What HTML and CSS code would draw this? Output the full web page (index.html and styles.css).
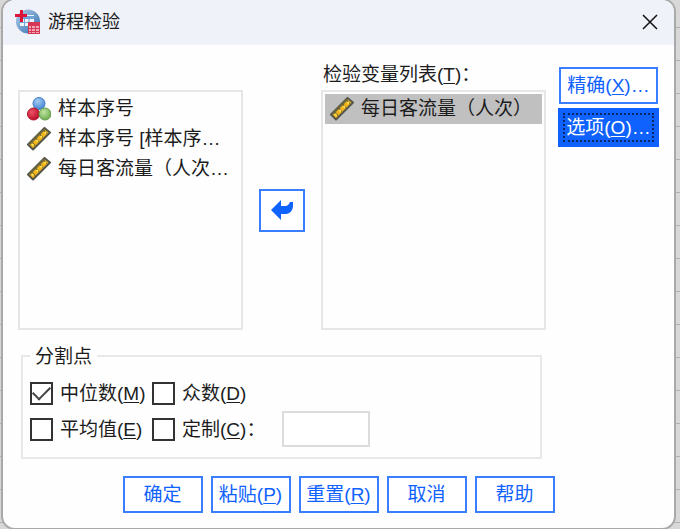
FILE: index.html
```html
<!DOCTYPE html>
<html lang="zh-CN">
<head>
<meta charset="utf-8">
<meta name="viewport" content="width=device-width, initial-scale=1">
<title>游程检验</title>
<link rel="stylesheet" href="styles.css">
</head>
<body>
<svg class="defs" aria-hidden="true">
  <defs>
    <radialGradient id="blue" cx="40%" cy="30%" r="70%"><stop offset="0" stop-color="#a5cdf5"/><stop offset="1" stop-color="#4585d0"/></radialGradient>
    <radialGradient id="red" cx="35%" cy="35%" r="70%"><stop offset="0" stop-color="#ee5266"/><stop offset="1" stop-color="#b80d28"/></radialGradient>
    <radialGradient id="green" cx="40%" cy="35%" r="70%"><stop offset="0" stop-color="#bfe5a0"/><stop offset="1" stop-color="#6aa84c"/></radialGradient>
    <linearGradient id="globe" x1="0" y1="0" x2="1" y2="1"><stop offset="0" stop-color="#b5cfe8"/><stop offset="1" stop-color="#2c6cb0"/></linearGradient>
    <symbol id="ruler" viewBox="0 0 24 24">
      <path d="M1 17.500 17.500 1 23 5.500 6 22.500Z" fill="#f4b41a" stroke="#55564a" stroke-width="2" stroke-linejoin="round"/>
      <path d="M2.500 17 17 2.500" stroke="#6b6740" stroke-width="2"/>
      <path d="m4 14.500 4 4M8 10.500l4 4M12 6.500l4 4M16 2.500l4 4" stroke="#6b6238" stroke-width="1.200"/>
      <path d="m5 18.500 1.500-1.500M9.500 14.500l1.500-1.500M13.500 10.500l1.500-1.500M17.500 6.500l1.500-1.500" stroke="#ffe04f" stroke-width="2.200"/>
    </symbol>
  </defs>
</svg>
<main class="dialog">
  <header class="titlebar">
    <svg class="app-icon" viewBox="0 0 25 25" aria-hidden="true">
      <circle cx="13" cy="12.500" r="12" fill="url(#globe)"/>
      <path d="M5 6h14v11H5z" fill="#edf5fc"/>
      <path d="M5 7h14v3H5z" fill="#6fa3d7"/>
      <path d="M5 13.500h14M9.500 10v7M14 10v7" stroke="#75a6d5"/>
      <path d="M5 1h3v4h4v3H8v5H5V8H0V5h5z" fill="#dc1438"/>
      <path d="M13 13h12v12H13z" fill="#d63756"/>
      <path d="M14 17h2v2h-2zm3 0h3v2h-3zm4 0h3v2h-3zm-7 3h2v2h-2zm3 0h3v2h-3zm4 0h3v2h-3zm-7 3h2v1h-2zm3 0h3v1h-3zm4 0h3v1h-3z" fill="#f3a5b3"/>
    </svg>
    <h1 class="title">游程检验</h1>
    <button class="close" type="button" aria-label="关闭"><svg viewBox="0 0 16 16"><path d="m1 1 14 14M15 1 1 15" stroke="#111" stroke-width="1.500"/></svg></button>
  </header>
  <form class="content">
    <div class="workspace">
      <div class="main">
        <div class="transfer">
          <ul class="list source" role="listbox" aria-label="变量">
            <li class="item" role="option" aria-selected="false"><svg class="icon" viewBox="0 0 24 24"><circle cx="12" cy="6.500" r="6" fill="url(#blue)" stroke="#427fc5"/><circle cx="6.500" cy="17" r="6" fill="url(#red)" stroke="#ad142b"/><circle cx="18" cy="17" r="6" fill="url(#green)" stroke="#629b48"/></svg><span>样本序号</span></li>
            <li class="item" role="option" aria-selected="false"><svg class="icon"><use href="#ruler"/></svg><span>样本序号 [样本序…</span></li>
            <li class="item" role="option" aria-selected="false"><svg class="icon"><use href="#ruler"/></svg><span>每日客流量（人次…</span></li>
          </ul>
          <button class="button move" type="button" aria-label="移动变量"><svg viewBox="0 0 22 20"><path d="M0 10 10 0v6h4c3 0 4-2 5-4h3v4c0 4-3 8-7 8h-5v6Z" fill="#0f62fe"/></svg></button>
          <span class="list-label" id="test-label">检验变量列表(<u>T</u>)：</span>
          <ul class="list target" role="listbox" aria-labelledby="test-label">
            <li class="item selected" role="option" aria-selected="true"><svg class="icon"><use href="#ruler"/></svg><span>每日客流量（人次）</span></li>
          </ul>
        </div>
        <fieldset class="cut">
          <legend>分割点</legend>
          <div class="choices">
            <label class="choice first"><input type="checkbox" checked><span>中位数(<u>M</u>)</span></label>
            <label class="choice"><input type="checkbox"><span>众数(<u>D</u>)</span></label>
            <label class="choice first"><input type="checkbox"><span>平均值(<u>E</u>)</span></label>
            <label class="choice"><input type="checkbox"><span>定制(<u>C</u>)：</span></label>
            <input class="custom" type="text" aria-label="定制值">
          </div>
        </fieldset>
      </div>
      <div class="side">
        <button class="button" type="button">精确(<u>X</u>)…</button>
        <button class="button active" type="button">选项(<u>O</u>)…</button>
      </div>
    </div>
    <footer class="actions">
      <button class="button" type="button">确定</button>
      <button class="button" type="button">粘贴(<u>P</u>)</button>
      <button class="button" type="button">重置(<u>R</u>)</button>
      <button class="button" type="button">取消</button>
      <button class="button" type="button">帮助</button>
    </footer>
  </form>
</main>
</body>
</html>
```
FILE: styles.css
```css
* { box-sizing: border-box; }

body {
  margin: 0;
  padding: 0 6px 1px 3px;
  min-height: 100vh;
  background: repeating-linear-gradient(#d8d8d8 0 27px, #b2b2b2 27px 28px, #d8d8d8 28px 33px);
  color: #1c1c1c;
  font: 19px/24px "Liberation Sans", "Noto Sans CJK SC", sans-serif;
}

button, input { font: inherit; color: inherit; }
u { text-underline-offset: 2px; text-decoration-thickness: 1px; }
.defs { position: absolute; width: 0; height: 0; }

.dialog {
  background: #fefefe;
  border-radius: 12px;
  box-shadow: 0 0 0 2px #a9a9a9;
  overflow: hidden;
}

.titlebar {
  display: flex;
  align-items: center;
  height: 45px;
  padding: 0 16px 2px 12px;
  background: #eff2f9;
}
.app-icon { width: 25px; height: 25px; }
.title { flex: 1; margin: 0 0 0 8px; font-size: 18px; font-weight: 400; }
.close { display: flex; padding: 0; border: 0; background: none; }
.close svg { width: 16px; height: 16px; }

.content { padding: 18px 15px 15px; }
.workspace { display: flex; gap: 12px; }
.main { flex: 1; min-width: 0; }

.transfer {
  display: grid;
  grid-template-columns: minmax(0, 1fr) 46px minmax(0, 1fr);
  grid-template-rows: 24px 240px;
  gap: 3px 16px;
}
.list-label { grid-area: 1 / 3; padding-left: 2px; white-space: nowrap; }
.list {
  margin: 0;
  padding: 2px;
  border: 2px solid #e6e6e6;
  list-style: none;
}
.source { grid-area: 2 / 1; }
.target { grid-area: 2 / 3; }
.item {
  display: flex;
  align-items: center;
  gap: 7px;
  height: 30px;
  padding-left: 5px;
  white-space: nowrap;
  overflow: hidden;
}
.selected { background: #c0c0c0; }
.icon { flex: none; width: 24px; height: 24px; }

.button {
  min-width: 80px;
  height: 37px;
  padding: 1px 0 0;
  border: 2px solid #3b7dff;
  background: #fff;
  color: #0f62fe;
  white-space: nowrap;
}
.move {
  grid-area: 2 / 2;
  align-self: center;
  display: flex;
  align-items: center;
  justify-content: center;
  min-width: 0;
  height: 43px;
  padding: 0;
}
.move svg { width: 22px; height: 20px; }

.side {
  display: flex;
  flex-direction: column;
  gap: 4px;
  width: 101px;
  padding-top: 4px;
}
.side .button { margin: 0 1px; }
.side .active {
  height: 39px;
  margin: 0;
  border: 0;
  background: #0f62fe;
  color: #fff;
  outline: 2px dotted #06286b;
  outline-offset: -7px;
}

.cut {
  margin: 13px 4px 0 3px;
  padding: 6px 7px 10px;
  border: 2px solid #e8e8e8;
}
.cut legend { padding: 2px 5px 0; }
.choices {
  display: grid;
  grid-template-columns: 122px 130px 88px;
  grid-auto-rows: 36px;
  align-items: center;
}
.choice { display: flex; align-items: center; gap: 7px; white-space: nowrap; }
.choice span { padding-top: 2px; }
.first { grid-column: 1; }
.choice input {
  appearance: none;
  flex: none;
  display: grid;
  width: 23px;
  height: 23px;
  margin: 0;
  border: 2px solid #333;
  background: #fff;
}
.choice input:checked::before {
  content: "";
  place-self: center;
  width: 15px;
  height: 8px;
  border: solid #444;
  border-width: 0 0 2px 2px;
  transform: translateY(-2px) rotate(-45deg);
}
.custom {
  grid-area: 2 / 3;
  width: 100%;
  height: 36px;
  border: 2px solid #dcdcdc;
  background: #fff;
}

.actions {
  display: flex;
  justify-content: center;
  gap: 8px;
  margin-top: 17px;
}
```
